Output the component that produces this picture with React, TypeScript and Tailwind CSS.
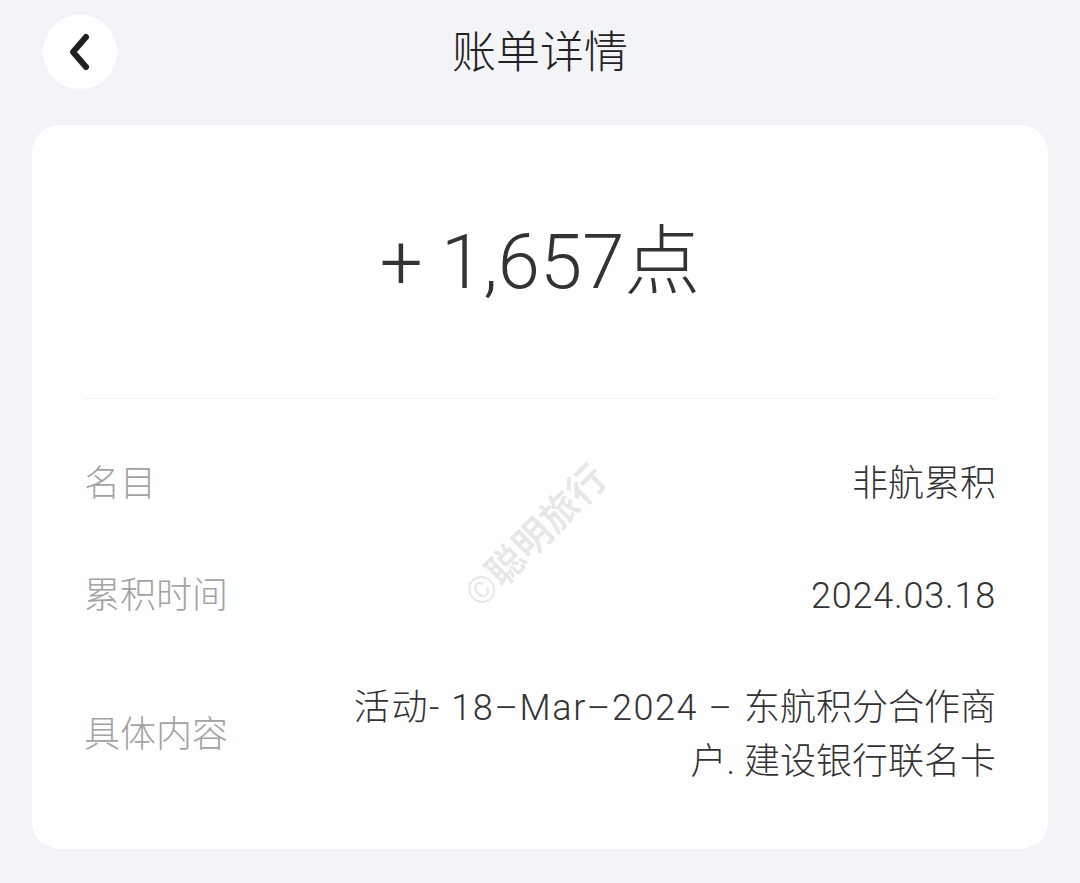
import React from "react";

const font = { fontFamily: '"Roboto", "Noto Sans CJK SC", sans-serif' };

export default function App() {
  return (
    <div className="min-h-[883px] w-[1080px] bg-[#f3f4f8] font-light" style={font}>
      <header className="relative flex h-[106px] items-center justify-center">
        <button className="absolute left-[43px] top-[15px] flex h-[74px] w-[74px] items-center justify-center rounded-full bg-white">
          <svg width="26" height="40" viewBox="0 0 26 40" fill="none">
            <path d="M19 5 L6 20 L19 35" stroke="#1f1f1f" strokeWidth="6" strokeLinecap="round" strokeLinejoin="round" />
          </svg>
        </button>
        <h1 className="text-[44px] leading-none font-light text-[#222]">账单详情</h1>
      </header>

      <main className="relative mx-[32px] mt-[19px] rounded-[28px] bg-white px-[52px]">
        <div className="flex h-[274px] items-center justify-center border-b border-[#f2f2f2]">
          <span className="text-[76px] leading-none text-[#333]">+ 1,657点</span>
        </div>

        <div className="flex flex-col gap-[58px] pt-[58px] pb-[60px] text-[36px] leading-[54px]">
          <div className="flex items-center justify-between">
            <span className="text-[#a3a3a3]">名目</span>
            <span className="text-[#333]">非航累积</span>
          </div>
          <div className="flex items-center justify-between">
            <span className="text-[#a3a3a3]">累积时间</span>
            <span className="tracking-[0.8px] text-[#333]">2024.03.18</span>
          </div>
          <div className="flex items-center justify-between">
            <span className="shrink-0 text-[#a3a3a3]">具体内容</span>
            <span className="text-right text-[#333]">
              <span className="tracking-[1.6px]">活动- 18–Mar–2024 – </span>
              东航积分合作商
              <br />
              户. 建设银行联名卡
            </span>
          </div>
        </div>

        <div className="pointer-events-none absolute left-[413px] top-[392px] -rotate-45 whitespace-nowrap text-[38px] font-bold leading-none text-[#000]/[0.09]">
          ©聪明旅行
        </div>
      </main>
    </div>
  );
}
